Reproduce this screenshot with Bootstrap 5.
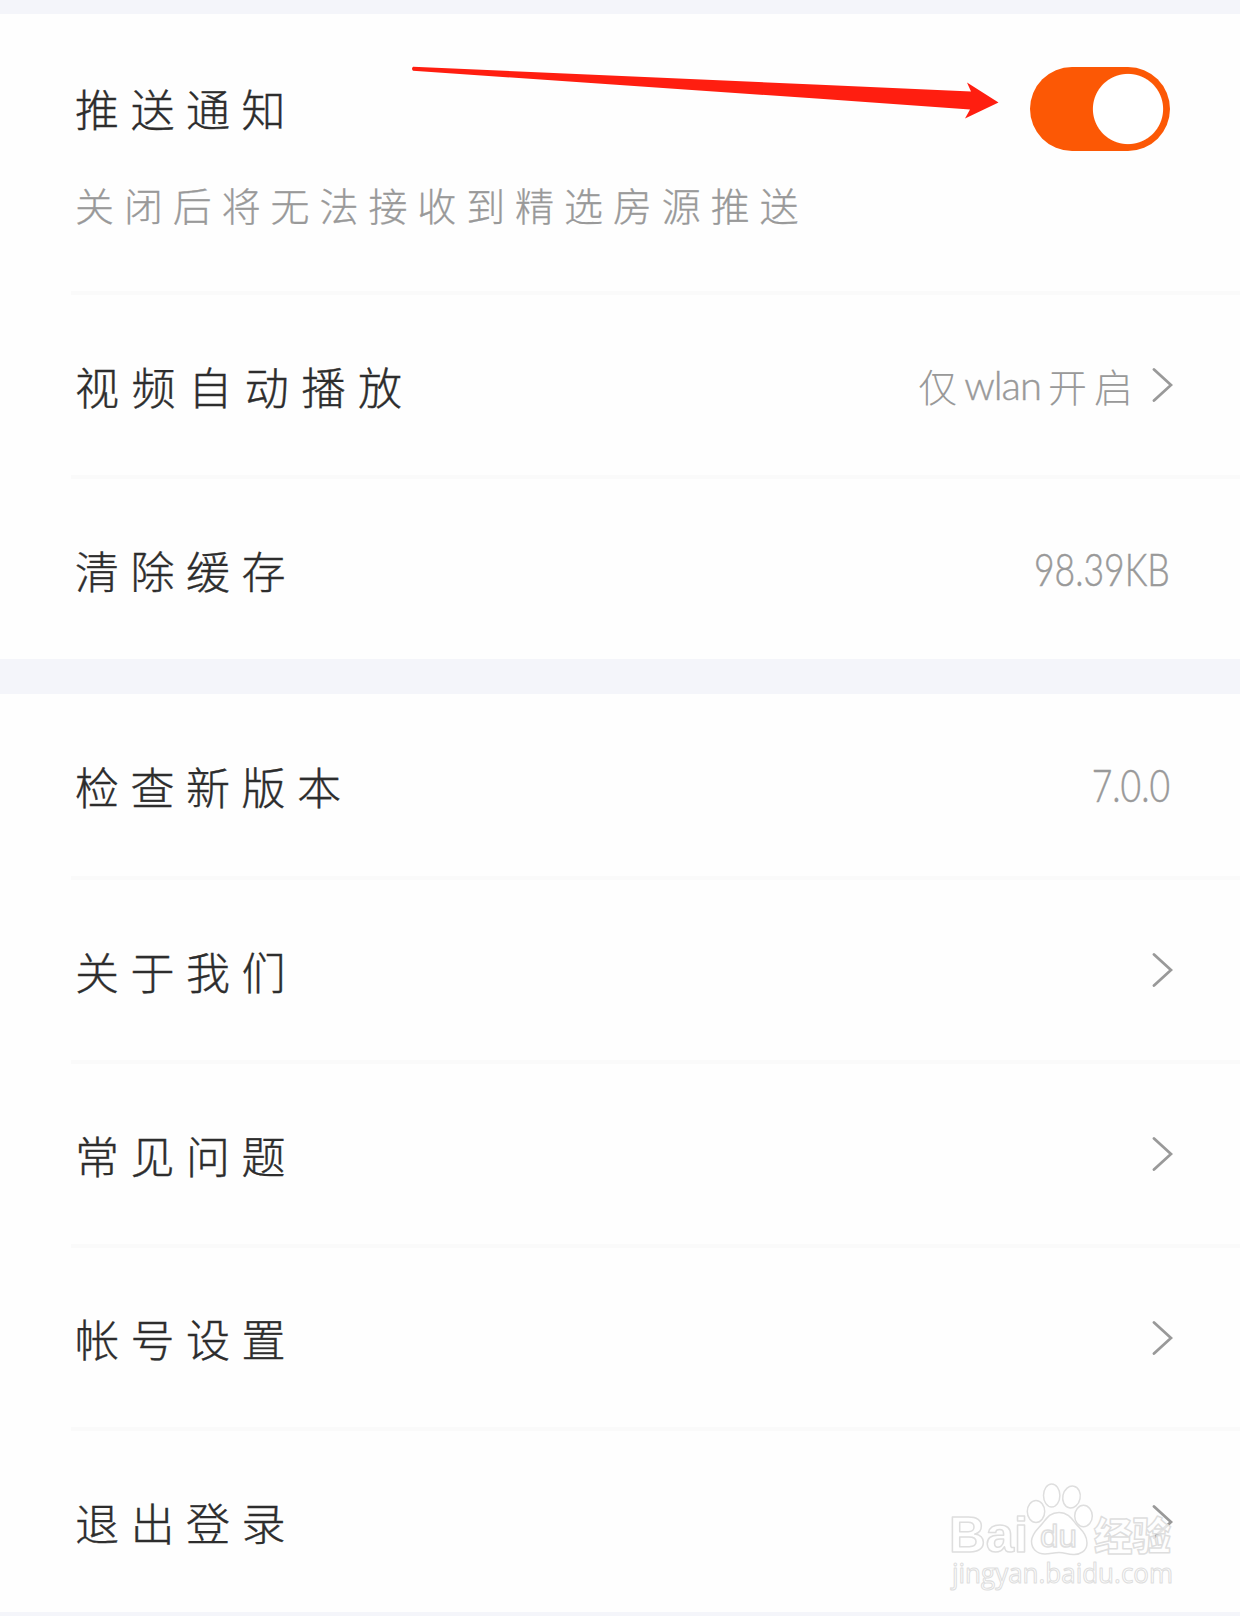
<!DOCTYPE html>
<html lang="zh-CN">
<head>
<meta charset="utf-8">
<meta name="viewport" content="width=device-width, initial-scale=1">
<title>设置</title>
<link href="https://cdn.jsdelivr.net/npm/bootstrap@5.3.0/dist/css/bootstrap.min.css" rel="stylesheet">
<style>
body{background:#fefefe;font-family:"Noto Sans CJK SC",sans-serif;font-weight:300}
main{height:1616px;overflow:hidden}
.band{background:#f4f5fa}
.band-top{height:14px}
.band-mid{height:35px}
.band-end{height:4px}
.settings .list-group-item{background:transparent;border:0;border-bottom:4px solid #fafafa;border-radius:0;margin-left:71px;padding:0 67px 0 4px;height:184px;color:#2d2d2d}
.settings .list-group-item:last-child{border-bottom-color:transparent;height:181px}
.settings .list-group-item.row-cache{height:180px}
.settings .push-item{height:281px;padding-top:53px;padding-right:70px}
.settings .row-tall{height:186px}
.settings .row-short{height:183px}
.label-text{font-size:44px;line-height:60px;letter-spacing:11.5px;white-space:nowrap;padding-top:1px;-webkit-text-stroke:.4px}
.label-six{letter-spacing:12.6px}
.push-title{padding-top:11px}
.hint{font-size:39px;line-height:56px;letter-spacing:9.9px;color:#999;padding-top:9px;white-space:nowrap;-webkit-text-stroke:.3px}
.value-text{color:#999;font-size:39px;line-height:60px;white-space:nowrap}
.latin{font-family:Lato,"Open Sans",sans-serif;font-weight:300;font-size:45px;transform:scaleX(.79);transform-origin:right;padding-right:4px;-webkit-text-stroke:.5px}
.latin-word{font-family:Lato,"Open Sans",sans-serif;font-size:40px;margin:0 7px;letter-spacing:-1px;-webkit-text-stroke:.4px}
.kai{letter-spacing:7px;margin-right:3px}
.switch-lg.form-check-input{width:140px;height:84px;margin:0;border:0;border-radius:42px;background:radial-gradient(circle at 98px 42px,#fff 34.6px,#fc5805 35.6px)}
.chev{width:22px;height:36px}
.chev path{fill:none;stroke:#999;stroke-width:2.8;stroke-linecap:round}
.overlay{pointer-events:none}
</style>
</head>
<body>
<main class="position-relative">
<div class="band band-top"></div>
<div class="list-group list-group-flush settings">
  <div class="list-group-item push-item">
    <div class="d-flex justify-content-between">
      <span class="label-text push-title">推送通知</span>
      <input class="form-check-input switch-lg" type="checkbox" role="switch" aria-label="推送通知" checked>
    </div>
    <div class="hint mt-3">关闭后将无法接收到精选房源推送</div>
  </div>
  <div class="list-group-item d-flex align-items-center justify-content-between">
    <span class="label-text label-six">视频自动播放</span>
    <span class="value-text d-flex align-items-center"><span>仅</span><span class="latin-word">wlan</span><span class="kai">开启</span>
      <svg class="chev ms-2" viewBox="0 0 22 36"><path d="M3 2.500 20 18 3 33.500"/></svg></span>
  </div>
  <div class="list-group-item row-cache d-flex align-items-center justify-content-between">
    <span class="label-text">清除缓存</span><span class="value-text latin">98.39KB</span>
  </div>
</div>
<div class="band band-mid"></div>
<div class="list-group list-group-flush settings">
  <div class="list-group-item row-tall d-flex align-items-center justify-content-between">
    <span class="label-text">检查新版本</span><span class="value-text latin">7.0.0</span>
  </div>
  <div class="list-group-item d-flex align-items-center justify-content-between">
    <span class="label-text">关于我们</span><svg class="chev" viewBox="0 0 22 36"><path d="M3 2.500 20 18 3 33.500"/></svg>
  </div>
  <div class="list-group-item d-flex align-items-center justify-content-between">
    <span class="label-text">常见问题</span><svg class="chev" viewBox="0 0 22 36"><path d="M3 2.500 20 18 3 33.500"/></svg>
  </div>
  <div class="list-group-item row-short d-flex align-items-center justify-content-between">
    <span class="label-text">帐号设置</span><svg class="chev" viewBox="0 0 22 36"><path d="M3 2.500 20 18 3 33.500"/></svg>
  </div>
  <div class="list-group-item d-flex align-items-center justify-content-between">
    <span class="label-text">退出登录</span><svg class="chev" viewBox="0 0 22 36"><path d="M3 2.500 20 18 3 33.500"/></svg>
  </div>
</div>
<div class="band band-end"></div>
<!-- red pointer and site watermark lie over the list -->
<svg class="overlay position-absolute top-0 start-0" width="1240" height="1616" viewBox="0 0 1240 1616">
  <path fill="#ff1e10" d="M413 66.700 820 84.800 971 91.500 967 82.500 998.500 102.500 965 118.500 970 109.500 820 98.800 413 70.800Q411 68.700 413 66.700Z"/>
  <g fill="#fff" fill-opacity=".75" stroke="#dedede" stroke-width="1.5" stroke-linejoin="round">
    <ellipse cx="1036" cy="1511.500" rx="8.700" ry="11"/>
    <ellipse cx="1051.700" cy="1495.500" rx="8.200" ry="11.500"/>
    <ellipse cx="1071.500" cy="1497" rx="8.700" ry="11" transform="rotate(12 1071.500 1497)"/>
    <ellipse cx="1083.500" cy="1516" rx="8.800" ry="10.700"/>
    <path d="M1059 1512.500C1068 1512.500 1072 1519 1076 1524C1081 1530 1087 1534 1087 1543C1087 1551 1080 1555 1073 1554.500C1067 1554 1064 1552.500 1059 1552.500C1054 1552.500 1050 1554 1045 1554C1037 1554 1031.500 1549 1031.500 1541C1032 1533 1038 1529 1042 1524C1047 1518 1050 1512.500 1059 1512.500Z"/>
    <text x="949" y="1552" font-family="Liberation Sans,sans-serif" font-weight="700" font-size="50" textLength="79" lengthAdjust="spacingAndGlyphs">Bai</text>
    <text x="1040" y="1547" font-family="Liberation Sans,sans-serif" font-weight="400" font-size="32" textLength="37" lengthAdjust="spacingAndGlyphs">du</text>
    <text x="1094" y="1550" font-family="Noto Sans CJK SC,sans-serif" font-weight="900" font-size="39" textLength="77" lengthAdjust="spacingAndGlyphs">经验</text>
    <text x="952" y="1582.500" stroke-width="1.100" fill-opacity="1" font-family="Open Sans,sans-serif" font-weight="400" font-size="27" textLength="221" lengthAdjust="spacingAndGlyphs">jingyan.baidu.com</text>
  </g>
</svg>
</main>
<script src="https://cdn.jsdelivr.net/npm/bootstrap@5.3.0/dist/js/bootstrap.bundle.min.js"></script>
</body>
</html>
